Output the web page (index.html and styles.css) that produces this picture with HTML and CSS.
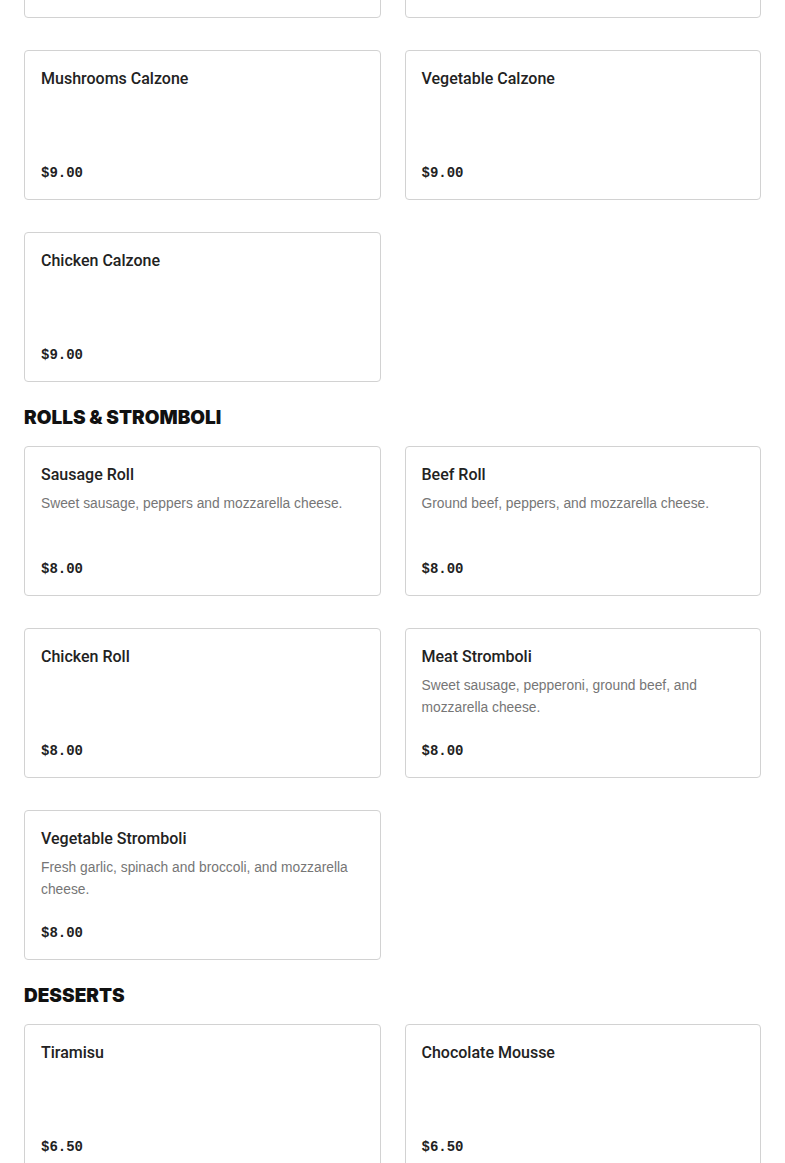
FILE: index.html
```html
<!DOCTYPE html>
<html>
<head>
<meta charset="utf-8">
<link rel="stylesheet" href="styles.css">
</head>
<body>
<main class="menu">
  <section class="section first">
    <div class="grid">
      <div class="card"><div class="title">&nbsp;</div><div class="price">&nbsp;</div></div>
      <div class="card"><div class="title">&nbsp;</div><div class="price">&nbsp;</div></div>
      <div class="card"><div class="title">Mushrooms Calzone</div><div class="price">$9.00</div></div>
      <div class="card"><div class="title">Vegetable Calzone</div><div class="price">$9.00</div></div>
      <div class="card"><div class="title">Chicken Calzone</div><div class="price">$9.00</div></div>
    </div>
  </section>
  <section class="section">
    <h2 class="heading">ROLLS &amp; STROMBOLI</h2>
    <div class="grid">
      <div class="card"><div class="title">Sausage Roll</div><div class="desc">Sweet sausage, peppers and mozzarella cheese.</div><div class="price">$8.00</div></div>
      <div class="card"><div class="title">Beef Roll</div><div class="desc">Ground beef, peppers, and mozzarella cheese.</div><div class="price">$8.00</div></div>
      <div class="card"><div class="title">Chicken Roll</div><div class="price">$8.00</div></div>
      <div class="card"><div class="title">Meat Stromboli</div><div class="desc">Sweet sausage, pepperoni, ground beef, and mozzarella cheese.</div><div class="price">$8.00</div></div>
      <div class="card"><div class="title">Vegetable Stromboli</div><div class="desc">Fresh garlic, spinach and broccoli, and mozzarella cheese.</div><div class="price">$8.00</div></div>
    </div>
  </section>
  <section class="section">
    <h2 class="heading">DESSERTS</h2>
    <div class="grid">
      <div class="card"><div class="title">Tiramisu</div><div class="price">$6.50</div></div>
      <div class="card"><div class="title">Chocolate Mousse</div><div class="price">$6.50</div></div>
    </div>
  </section>
</main>
</body>
</html>
```
FILE: styles.css
```css
html, body {
  margin: 0;
  padding: 0;
  background: #fff;
  overflow: hidden;
}
.menu {
  padding: 0 24px;
  margin-top: -132px;
  font-family: "Liberation Sans", Arial, sans-serif;
  color: #222;
}
.heading {
  margin: 0;
  padding-top: 24px;
  margin-bottom: 16px;
  font-family: Inter, "Liberation Sans", sans-serif;
  font-weight: 900;
  font-size: 19px;
  line-height: 24px;
  color: #111;
}
.grid {
  display: grid;
  grid-template-columns: 1fr 1fr;
  column-gap: 24px;
  row-gap: 32px;
}
.card {
  box-sizing: border-box;
  height: 150px;
  border: 1px solid #d2d2d2;
  border-radius: 4px;
  padding: 16px 16px 15px;
  display: flex;
  flex-direction: column;
}
.title {
  font-family: Roboto, "Liberation Sans", sans-serif;
  font-size: 16px;
  line-height: 24px;
  font-weight: 500;
  color: #222;
}
.desc {
  margin-top: 6px;
  font-size: 13.8px;
  line-height: 22px;
  color: #767676;
}
.price {
  margin-top: auto;
  font-family: "Liberation Mono", "DejaVu Sans Mono", monospace;
  font-weight: 700;
  font-size: 14px;
  line-height: 22px;
  color: #222;
}
```
